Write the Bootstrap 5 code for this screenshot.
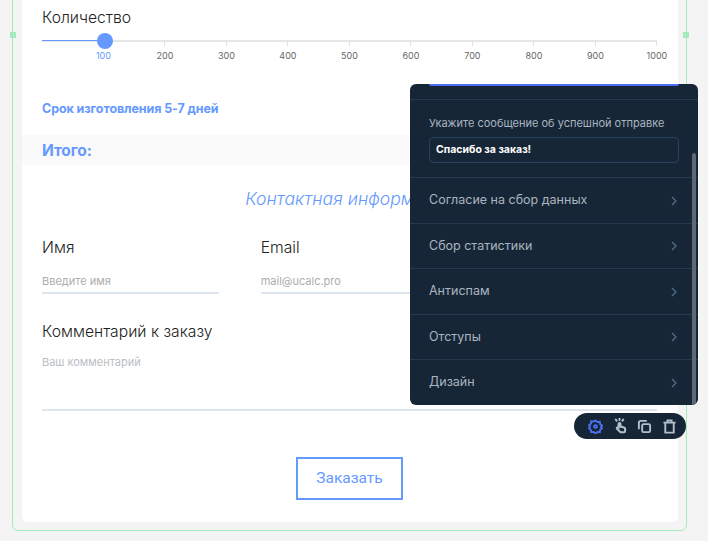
<!DOCTYPE html>
<html lang="ru"><head><meta charset="utf-8">
<link href="https://cdn.jsdelivr.net/npm/bootstrap@5.3.0/dist/css/bootstrap.min.css" rel="stylesheet">
<style>
html,body{margin:0;height:541px;overflow:hidden;background:#f4f4f4}
body{font-family:Inter,"Noto Sans",sans-serif;color:#222}
.stage{position:relative;width:708px;height:541px;overflow:hidden}
.frame{position:relative;margin:-20px 0 0 12px;width:675px;height:551px;border:1px solid #a3eabd;border-radius:6px;padding:0 8px 8px 9px}
.handle{position:absolute;width:6px;height:6px;background:#a3eabd;top:51px}
.handle-l{left:-3px}.handle-r{right:-3px}
.sheet{height:541px;background:#fff;border-radius:0 0 6px 6px;padding-top:27px}
.pad{padding:0 21px 0 20px}
.qty{font-size:15.7px;line-height:20px;font-weight:300}
.slider{position:relative;height:40px;margin-top:12px}
.track{height:2px;background:#e6e6e6;position:relative}
.fill{position:absolute;left:0;top:0;height:1px;width:63px;background:#6699ff}
.thumb{position:absolute;left:55px;top:-7px;width:16px;height:16px;border-radius:50%;background:#6699ff}
.ticks{position:absolute;left:61.4px;right:0;top:0;display:flex;justify-content:space-between}
.tick{width:0;display:flex;flex-direction:column;align-items:center;font-size:9px;color:#666;white-space:nowrap}
.tick i{display:block;width:1px;height:6px;background:#e2e2e2;flex:none}
.tick span{margin-top:3px;line-height:14px}
.tick.on{color:#6699ff}.tick.on i{visibility:hidden}
.term{font-size:12.5px;font-weight:700;color:#6699ff;line-height:16px;margin-top:21px;letter-spacing:-.1px}
.total{background:#fafafa;height:31px;margin-top:18px;display:flex;align-items:center;padding-left:20px;font-size:15.5px;font-weight:700;color:#6699ff;letter-spacing:-.1px}
.ctitle{font-size:17.6px;font-style:italic;font-weight:300;color:#6699ff;text-align:center;line-height:24px;margin-top:21px;white-space:nowrap}
.fields{display:grid;grid-template-columns:repeat(3,176.67px);column-gap:42px;margin-top:27px}
.flabel{font-size:15.7px;line-height:20px;font-weight:300}
.fline{height:36px;border-bottom:2px solid #dde5f0;font-size:11px;color:#adadad;padding-top:16px;line-height:14px}
.comment{margin-top:28px}
.cline{height:69px;border-bottom:2px solid #dde5f0;font-size:11px;color:#b9bec4;padding-top:13px;line-height:14px}
.orderwrap{display:flex;justify-content:center;margin-top:46px}
.orderbtn{width:107px;height:43px;border:2px solid #6699ff;border-radius:0;color:#6699ff;background:#fff;font-family:Roboto,sans-serif;font-size:15.5px;padding:0}
.panel{position:absolute;left:410px;top:84px;width:288px;height:321px;background:#172636;border-radius:6px;overflow:hidden;color:#a9b5c0}
.topbar{height:2px;margin:0 19px;background:#4c6ef5;border-radius:0 0 2px 2px}
.psec{height:79px;margin-top:13px;border-top:1px solid #233a50;border-bottom:1px solid #233a50;padding:15px 19px 0}
.plabel{font-size:11px;line-height:16px;white-space:nowrap}
.pinput{height:26px;margin-top:6px;border:1px solid #27435f;border-radius:4px;background:#172636;color:#fff;font-size:10.5px;font-weight:700;line-height:24px;padding-left:6px}
.prow{height:45.5px;display:flex;justify-content:space-between;align-items:center;padding:1px 21px 0 19px;border-bottom:1px solid #233a50;font-size:12.5px}
.prow:last-of-type{border-bottom:0}
.pscroll{position:absolute;right:2px;top:69px;bottom:0;width:4px;background:#5d6875;border-radius:2px 2px 0 0}
.tools{position:absolute;left:574px;top:413px;width:112px;height:26px;border-radius:13px;background:#172636;display:flex;align-items:center;gap:9.500px;padding-left:14px}
.tools svg{display:block;flex:none}
</style></head><body>
<div class="stage">
 <div class="frame">
  <div class="handle handle-l"></div><div class="handle handle-r"></div>
  <div class="sheet">
   <div class="pad">
    <div class="qty">Количество</div>
    <div class="slider">
     <div class="track"><div class="fill"></div><div class="thumb"></div>
      <div class="ticks">
       <div class="tick on"><i></i><span>100</span></div><div class="tick"><i></i><span>200</span></div><div class="tick"><i></i><span>300</span></div><div class="tick"><i></i><span>400</span></div><div class="tick"><i></i><span>500</span></div><div class="tick"><i></i><span>600</span></div><div class="tick"><i></i><span>700</span></div><div class="tick"><i></i><span>800</span></div><div class="tick"><i></i><span>900</span></div><div class="tick"><i></i><span>1000</span></div>
      </div>
     </div>
    </div>
    <div class="term">Срок изготовления 5-7 дней</div>
   </div>
   <div class="total">Итого:</div>
   <div class="ctitle">Контактная информация</div>
   <div class="pad">
    <div class="fields">
     <div><div class="flabel">Имя</div><div class="fline">Введите имя</div></div>
     <div><div class="flabel">Email</div><div class="fline">mail@ucalc.pro</div></div>
     <div></div>
    </div>
    <div class="comment"><div class="flabel">Комментарий к заказу</div><div class="cline">Ваш комментарий</div></div>
    <div class="orderwrap"><button class="btn orderbtn" type="button">Заказать</button></div>
   </div>
  </div>
 </div>
 <div class="panel">
  <div class="topbar"></div>
  <div class="psec"><div class="plabel">Укажите сообщение об успешной отправке</div><div class="pinput">Спасибо за заказ!</div></div>
  <div class="prow"><span>Согласие на сбор данных</span><svg width="6" height="10" viewBox="0 0 6 10" fill="none" stroke="#56718c" stroke-width="1.2"><path d="M1 1l4 4-4 4"/></svg></div>
  <div class="prow"><span>Сбор статистики</span><svg width="6" height="10" viewBox="0 0 6 10" fill="none" stroke="#56718c" stroke-width="1.2"><path d="M1 1l4 4-4 4"/></svg></div>
  <div class="prow"><span>Антиспам</span><svg width="6" height="10" viewBox="0 0 6 10" fill="none" stroke="#56718c" stroke-width="1.2"><path d="M1 1l4 4-4 4"/></svg></div>
  <div class="prow"><span>Отступы</span><svg width="6" height="10" viewBox="0 0 6 10" fill="none" stroke="#56718c" stroke-width="1.2"><path d="M1 1l4 4-4 4"/></svg></div>
  <div class="prow"><span>Дизайн</span><svg width="6" height="10" viewBox="0 0 6 10" fill="none" stroke="#56718c" stroke-width="1.2"><path d="M1 1l4 4-4 4"/></svg></div>
  <div class="pscroll"></div>
 </div>
 <div class="tools">
  <svg width="15" height="15" viewBox="0 0 16 16" fill="none" stroke="#4c6ef5" stroke-width="2"><path d="M8 1.500l2 1.700 2.600-.200.400 2.500 2 1.500-1.200 1.500 1.200 1.500-2 1.500-.400 2.500-2.600-.200-2 1.700-2-1.700-2.600.200-.400-2.500-2-1.500L2.200 8 1 6.500l2-1.500.400-2.500 2.600.200z"/><circle cx="8" cy="8" r="1.500"/></svg>
  <svg width="15" height="16" viewBox="0 0 15 16" fill="none" stroke="#b4c0cb" stroke-width="2"><path d="M5.500 7.500V6a1 1 0 0 1 2 0v2.600l3.600.8c.6.100 1 .7 1 1.300v2.300c0 .7-.5 1.200-1.200 1.200H7.500L4 10.800c-.7-.9.400-2 1.500-1.300z"/><path d="M2.800 1.500l.8 1.200M6.500 .5v1.500M10.200 1.500l-.8 1.200" stroke-linecap="round"/></svg>
  <svg width="15" height="15" viewBox="0 0 16 16" fill="none" stroke="#b4c0cb" stroke-width="2"><path d="M10.500 2H4A2 2 0 0 0 2 4v7"/><rect x="5.500" y="5.500" width="8.500" height="8.500" rx="1.500"/></svg>
  <svg width="15" height="15" viewBox="0 0 16 16" fill="none" stroke="#b4c0cb" stroke-width="2"><path d="M1.500 3.800h13M5.800 3.800V1.500h4.400v2.300M3.500 3.800v10.700h9V3.800"/></svg>
 </div>
</div>
</body></html>
